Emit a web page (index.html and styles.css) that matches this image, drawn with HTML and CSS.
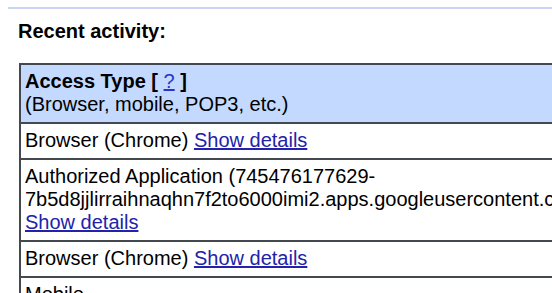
FILE: index.html
```html
<!DOCTYPE html>
<html>
<head>
<meta charset="utf-8">
<link rel="stylesheet" href="styles.css">
</head>
<body>
<div class="page">
  <div class="rule"></div>
  <div class="section">
    <h2 class="heading">Recent activity:</h2>
    <table class="activity">
      <tr class="head">
        <th><b>Access Type [ <a href="#" class="help">?</a> ]</b><br><span class="sub">(Browser, mobile, POP3, etc.)</span></th>
        <th class="nw"><b>Location (IP address) [ <a href="#" class="help">?</a> ]</b></th>
        <th class="nw"><b>Date/Time</b></th>
      </tr>
      <tr>
        <td>Browser (Chrome) <a href="#">Show details</a></td>
        <td class="nw">* United States (CA)</td>
        <td class="nw">10:21 am (0 minutes ago)</td>
      </tr>
      <tr>
        <td>Authorized Application (745476177629-7b5d8jjlirraihnaqhn7f2to6000imi2.apps.googleusercontent.com) <a href="#">Show details</a></td>
        <td class="nw">United States (CA)</td>
        <td class="nw">10:15 am (6 minutes ago)</td>
      </tr>
      <tr>
        <td>Browser (Chrome) <a href="#">Show details</a></td>
        <td class="nw">United States (CA)</td>
        <td class="nw">9:58 am (23 minutes ago)</td>
      </tr>
      <tr>
        <td>Mobile</td>
        <td class="nw">United States (CA)</td>
        <td class="nw">9:40 am (41 minutes ago)</td>
      </tr>
    </table>
  </div>
</div>
</body>
</html>
```
FILE: styles.css
```css
html, body {
  margin: 0;
  padding: 0;
  background: #fff;
  overflow: hidden;
}
body {
  font-family: "Liberation Sans", Arial, sans-serif;
  font-size: 20px;
  color: #000;
}
.page {
  padding: 7px 0 0 8px;
}
.rule {
  height: 2px;
  background: #cbd4f2;
}
.section {
  padding-left: 10px;
}
.heading {
  margin: 11px 0 20px 0;
  font-size: 20px;
  font-weight: bold;
  line-height: 23px;
}
.activity {
  border-collapse: collapse;
  margin-left: 1px;
  line-height: 23px;
}
.activity th,
.activity td {
  border: 2px solid #44484f;
  padding: 5px 4px 6px 4px;
  text-align: left;
  vertical-align: top;
}
.activity .nw {
  white-space: nowrap;
}
.activity th {
  font-weight: normal;
  background: #c3d9ff;
}
.activity a {
  color: #2222aa;
  text-decoration: underline;
}
.activity .help {
  font-weight: normal;
  color: #2a34c8;
}
```
